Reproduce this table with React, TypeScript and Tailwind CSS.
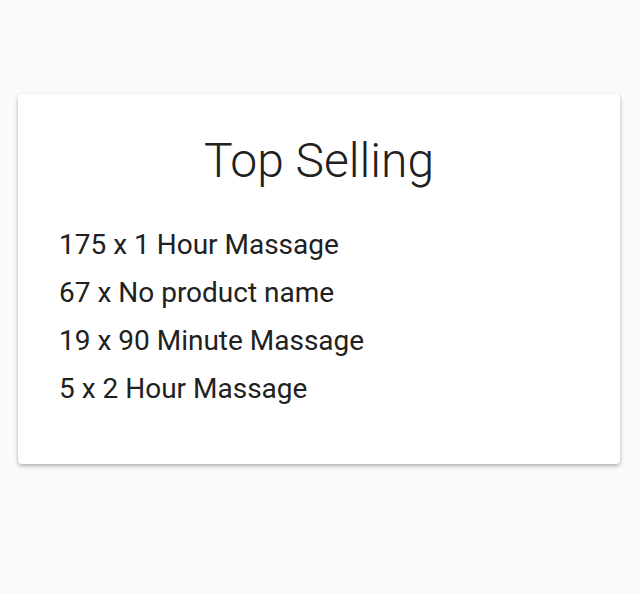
const items = [
  { qty: 175, name: '1 Hour Massage' },
  { qty: 67, name: 'No product name' },
  { qty: 19, name: '90 Minute Massage' },
  { qty: 5, name: '2 Hour Massage' },
];

export default function App() {
  return (
    <div className="min-h-[594px] w-full bg-[#fafafa] font-['Roboto',sans-serif] text-[#212121]">
      <div className="pl-[18px] pr-[20px] pt-[94px] pb-[130px]">
        <div className="h-[370px] rounded-[4px] bg-white px-[41px] shadow-[0_2px_4px_rgba(0,0,0,0.3)]">
          <h2 className="pt-[35px] text-center text-[48px] leading-[64px] font-light">Top Selling</h2>
          <ul className="mt-[28px]">
            {items.map((it) => (
              <li key={it.name} className="text-[28px] leading-[48px]">
                {it.qty} x {it.name}
              </li>
            ))}
          </ul>
        </div>
      </div>
    </div>
  );
}
